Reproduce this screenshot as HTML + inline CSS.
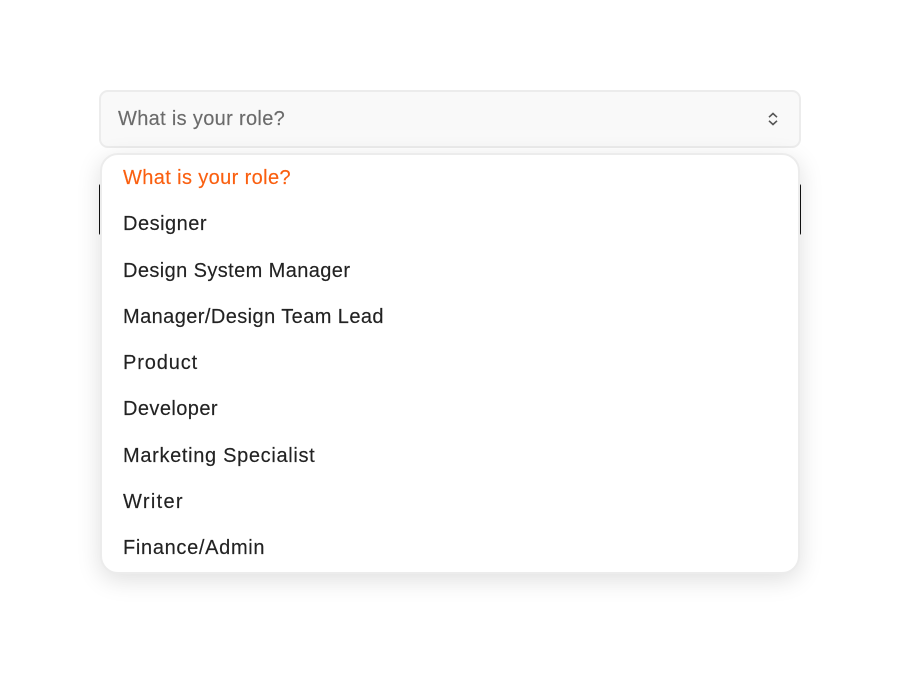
<!DOCTYPE html>
<html><head><meta charset="utf-8">
<style>
html,body{margin:0;padding:0;background:#fff;width:900px;height:679px;overflow:hidden}
body{position:relative;font-family:"Liberation Sans",sans-serif;-webkit-font-smoothing:antialiased}
.sel{position:absolute;box-sizing:border-box;left:99px;top:90px;width:702px;height:58px;background:#f9f9f9;border:2px solid #ececec;border-radius:9px}
.sel span{position:absolute;left:17px;top:16px;font-size:20px;line-height:23px;color:#6b6b6b;letter-spacing:.33px;white-space:nowrap;-webkit-text-stroke:.15px #6b6b6b}
.bar{position:absolute;left:99px;top:184px;width:702px;height:51px;background:#111;border-radius:2px}
.menu{position:absolute;box-sizing:border-box;left:100px;top:153px;width:700px;height:421px;background:#fff;border:2px solid #ececec;border-radius:18px;box-shadow:0 6px 24px rgba(0,0,0,.13)}
.i{position:absolute;left:123px;font-size:20px;line-height:24px;color:#222;white-space:nowrap;-webkit-text-stroke:.15px currentColor}
svg{position:absolute;left:767px;top:112px}
</style></head>
<body>
<div class="sel"><span>What is your role?</span></div>
<svg width="12" height="14" viewBox="0 0 12 14" fill="none" stroke="#555" stroke-width="1.6"><path d="M2 5.2 6 1.5 10 5.2"/><path d="M2 8.8 6 12.5 10 8.8"/></svg>
<div class="bar"></div>
<div class="menu"></div>
<div class="i" style="top:166px;color:#fa5f0f;letter-spacing:.38px">What is your role?</div>
<div class="i" style="top:212px;letter-spacing:.5px">Designer</div>
<div class="i" style="top:259px;letter-spacing:.4px">Design System Manager</div>
<div class="i" style="top:305px;letter-spacing:.42px">Manager/Design Team Lead</div>
<div class="i" style="top:351px;letter-spacing:.87px">Product</div>
<div class="i" style="top:397px;letter-spacing:.42px">Developer</div>
<div class="i" style="top:444px;letter-spacing:.67px">Marketing Specialist</div>
<div class="i" style="top:490px;letter-spacing:1.32px">Writer</div>
<div class="i" style="top:536px;letter-spacing:.68px">Finance/Admin</div>
</body></html>
